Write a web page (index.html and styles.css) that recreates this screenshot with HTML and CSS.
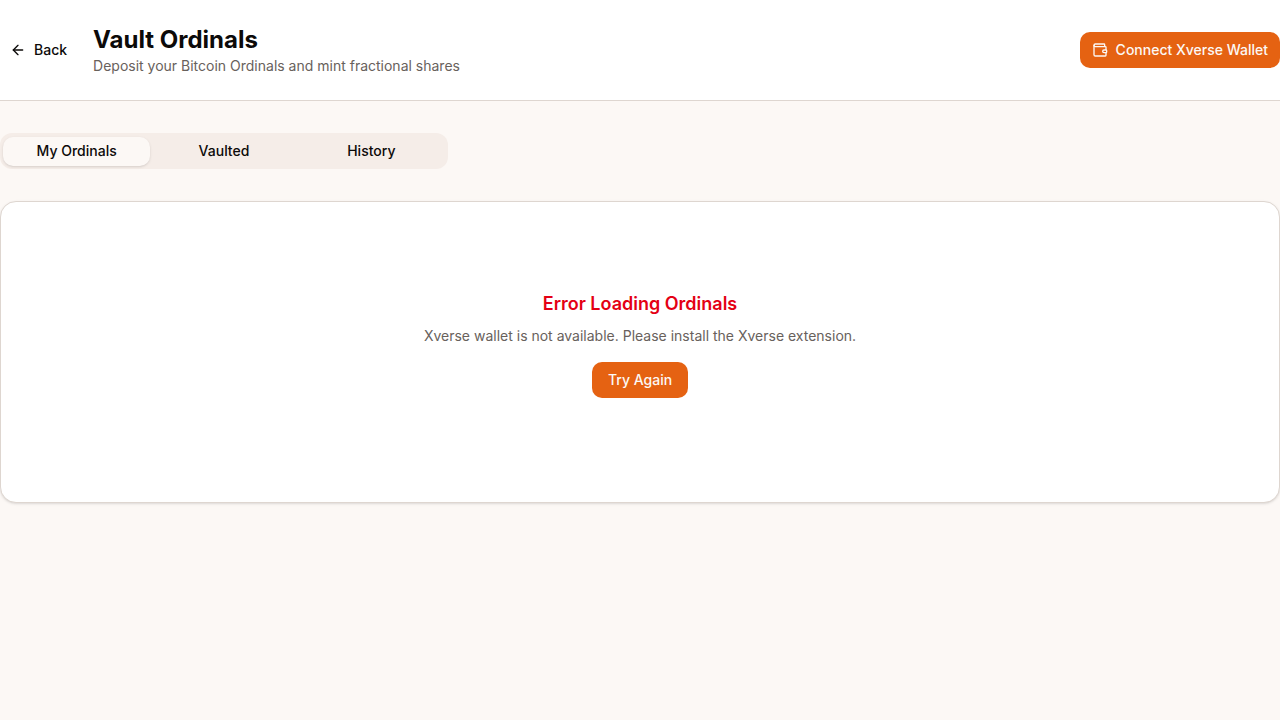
FILE: index.html
```html
<!DOCTYPE html>
<html lang="en">
<head>
<meta charset="utf-8">
<meta name="viewport" content="width=device-width, initial-scale=1">
<title>Vault Ordinals</title>
<link rel="stylesheet" href="styles.css">
</head>
<body>
<header class="header">
  <a class="button button-ghost" href="#">
    <svg class="icon" viewBox="0 0 24 24" aria-hidden="true"><path d="m12 19-7-7 7-7"/><path d="M19 12H5"/></svg>
    Back
  </a>
  <div class="heading">
    <h1 class="title">Vault Ordinals</h1>
    <p class="muted">Deposit your Bitcoin Ordinals and mint fractional shares</p>
  </div>
  <button class="button button-primary button-wallet" type="button">
    <svg class="icon" viewBox="0 0 24 24" aria-hidden="true"><path d="M19 7V4a1 1 0 0 0-1-1H5a2 2 0 0 0 0 4h15a1 1 0 0 1 1 1v4h-3a2 2 0 0 0 0 4h3a1 1 0 0 0 1-1v-2a1 1 0 0 0-1-1"/><path d="M3 5v14a2 2 0 0 0 2 2h15a1 1 0 0 0 1-1v-4"/></svg>
    Connect Xverse Wallet
  </button>
</header>
<main class="main">
  <div class="tabs" role="tablist" aria-label="Ordinals">
    <button class="tab tab-active" type="button" role="tab" aria-selected="true" aria-controls="panel">My Ordinals</button>
    <button class="tab" type="button" role="tab" aria-selected="false">Vaulted</button>
    <button class="tab" type="button" role="tab" aria-selected="false">History</button>
  </div>
  <section class="card" id="panel" role="tabpanel">
    <h2 class="error-title">Error Loading Ordinals</h2>
    <p class="muted">Xverse wallet is not available. Please install the Xverse extension.</p>
    <button class="button button-primary retry" type="button">Try Again</button>
  </section>
</main>
</body>
</html>
```
FILE: styles.css
```css
* {
  box-sizing: border-box;
}

body {
  margin: 0;
  background: #fcf8f5;
  color: #0c0a09;
  font-family: Inter, "Liberation Sans", sans-serif;
  font-size: 14px;
  line-height: 20px;
}

h1, h2, p {
  margin: 0;
}

.header {
  display: flex;
  align-items: center;
  gap: 16px;
  padding: 24px 0;
  background: #fff;
  border-bottom: 1px solid #ded6d0;
}

.heading {
  flex: 1;
}

.title {
  font-size: 24px;
  line-height: 32px;
  font-weight: 700;
}

.muted {
  color: #68615c;
}

.button {
  display: inline-flex;
  align-items: center;
  justify-content: center;
  gap: 8px;
  height: 36px;
  padding: 0 16px;
  border: 0;
  border-radius: 10px;
  font: inherit;
  font-weight: 500;
  color: inherit;
  text-decoration: none;
  white-space: nowrap;
  cursor: pointer;
}

.button-ghost {
  padding: 0 10px;
}

.button-primary {
  background: #e56212;
  color: #fcf8f5;
}

.button-wallet {
  padding: 0 12px;
}

.icon {
  width: 16px;
  height: 16px;
  flex: none;
  fill: none;
  stroke: currentColor;
  stroke-width: 2;
  stroke-linecap: round;
  stroke-linejoin: round;
}

.main {
  display: grid;
  gap: 32px;
  padding: 32px 0;
}

.tabs {
  display: grid;
  grid-template-columns: repeat(3, 1fr);
  width: 100%;
  max-width: 448px;
  height: 36px;
  padding: 4px 3px 3px;
  border-radius: 12px;
  background: #f5ede8;
}

.tab {
  padding: 0 8px 2px;
  border: 0;
  border-radius: 10px;
  background: transparent;
  color: inherit;
  font: inherit;
  font-weight: 500;
  cursor: pointer;
}

.tab-active {
  background: #fcf8f5;
  box-shadow: 0 1px 3px rgb(0 0 0 / 10%), 0 1px 2px -1px rgb(0 0 0 / 10%);
}

.card {
  display: flex;
  flex-direction: column;
  align-items: center;
  padding: 88px 24px 104px;
  background: #fff;
  border: 1px solid #ded6d0;
  border-radius: 16px;
  box-shadow: 0 1px 3px rgb(0 0 0 / 10%), 0 1px 2px -1px rgb(0 0 0 / 10%);
  text-align: center;
}

.error-title {
  margin-bottom: 8px;
  color: #e40014;
  font-size: 18px;
  line-height: 28px;
  font-weight: 600;
}

.retry {
  margin-top: 16px;
}
```
